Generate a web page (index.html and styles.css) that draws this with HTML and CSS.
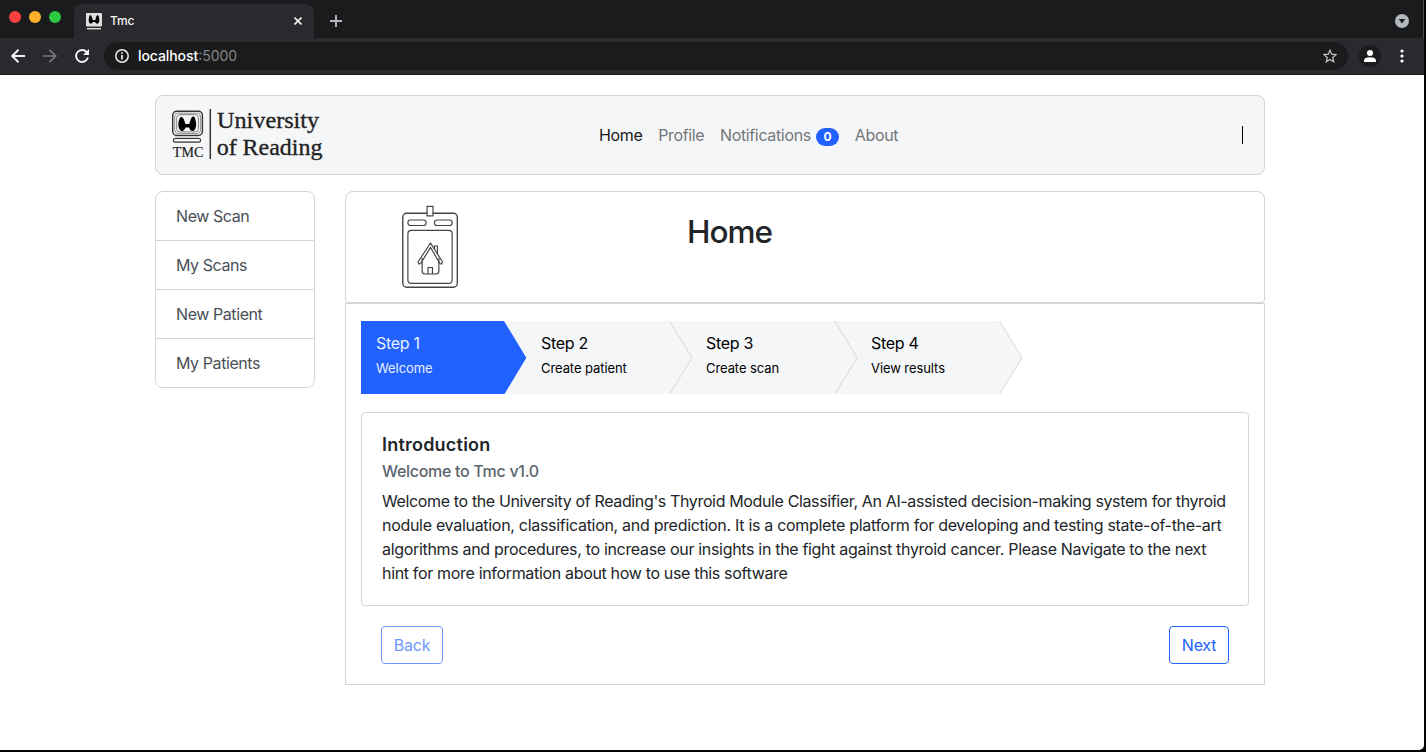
FILE: index.html
```html
<!DOCTYPE html>
<html lang="en">
<head>
<meta charset="utf-8">
<title>Tmc</title>
<link rel="stylesheet" href="styles.css">
</head>
<body>
<div class="window">
  <header class="tabbar">
    <div class="lights"><i class="red"></i><i class="amber"></i><i class="green"></i></div>
    <div class="tab">
      <svg class="favicon" width="16" height="17" viewBox="0 0 16 17"><rect width="16" height="13.500" rx="1" fill="#dedede"/><path d="M3 4.500Q3.200 2 4.500 2.200T6.500 6.500L7 7.300h2L9.500 6.500Q10 2.400 11.500 2.200T13 4.500Q14 9 12 10.500 10.500 11.200 9 9H7Q5.500 11.200 4 10.500 2 9 3 4.500Z" fill="#000"/><path d="M1 15.700h14" stroke="#ddd" stroke-width="1.400"/></svg>
      <span class="tab-title">Tmc</span>
      <svg class="tab-close" width="8" height="8" viewBox="0 0 8 8"><path d="M.5.5l7 7m0-7l-7 7" stroke="#f1f1f1" stroke-width="1.600"/></svg>
    </div>
    <svg class="plus" width="12" height="12" viewBox="0 0 12 12"><path d="M6 0v12M0 6h12" stroke="#b2b5ba" stroke-width="1.900"/></svg>
    <svg class="dropdown" width="14" height="14" viewBox="0 0 14 14"><circle cx="7" cy="7" r="7" fill="#b4b7bc"/><path d="M3.700 5h6.600L7 9.500z" fill="#191b1c"/></svg>
  </header>
  <div class="toolbar">
    <svg width="14" height="14" viewBox="0 0 14 14"><path d="M14 7H1.500M7.500.8L1.200 7l6.300 6.200" fill="none" stroke="#f4f4f5" stroke-width="1.900"/></svg>
    <svg width="14" height="14" viewBox="0 0 14 14"><path d="M0 7h12.500M6.500.8L12.800 7l-6.300 6.200" fill="none" stroke="#77797c" stroke-width="1.700"/></svg>
    <svg width="14" height="14" viewBox="0 0 14 14"><path d="M12.900 8.500A6 6 0 1 1 11.700 3.100" fill="none" stroke="#f4f4f5" stroke-width="1.900"/><path d="M14 0v6H8z" fill="#f4f4f5"/></svg>
    <div class="address">
      <svg width="14" height="14" viewBox="0 0 14 14"><circle cx="7" cy="7" r="6.200" fill="none" stroke="#eee" stroke-width="1.500"/><path d="M7 6v4.500M7 3.300v1.500" stroke="#eee" stroke-width="1.700"/></svg>
      <span class="url">localhost<span class="port">:5000</span></span>
      <svg class="star" width="14" height="14" viewBox="0 0 14 14"><path d="M7 1.200l1.700 4 4.300.4-3.300 2.900 1 4.200L7 10.500l-3.700 2.200 1-4.200L1 5.600l4.300-.4z" fill="none" stroke="#c4c5c8" stroke-width="1.200"/></svg>
    </div>
    <svg class="avatar" width="22" height="22" viewBox="0 0 22 22"><circle cx="11" cy="11" r="11" fill="#191b1c"/><circle cx="11" cy="8" r="3" fill="#fff"/><path d="M5 17v-1.500Q5.500 12.200 11 12.200T17 15.500V17z" fill="#fff"/></svg>
    <svg class="kebab" width="4" height="14" viewBox="0 0 4 14"><g fill="#fff"><circle cx="2" cy="2" r="1.600"/><circle cx="2" cy="7" r="1.600"/><circle cx="2" cy="12" r="1.600"/></g></svg>
  </div>
  <main class="page">
    <nav class="navbar">
      <svg class="logo" width="152" height="60" viewBox="0 -4 152 60">
        <g fill="none" stroke="#333"><rect x=".7" y="2.200" width="29.700" height="24.200" rx="4" stroke-width="1.400"/><rect x="2.700" y="4.200" width="25.700" height="20.200" rx="3" stroke="#777" stroke-width=".8"/><rect x="4.700" y="5.700" width="21.700" height="17.200" rx="3" stroke="#777" stroke-width=".9"/><rect x="1.500" y="29.500" width="27" height="3.700" rx="1.500" stroke-width="1.200"/><path d="M3 28h24" stroke="#999" stroke-width=".8"/><path d="M38.300 0v50" stroke-width="1.500"/></g>
        <path d="M7 11Q8.500 7 10 8T12.500 12L13.300 15h4L18.200 12Q19.500 7 21.500 7.500T23.500 11Q25.500 18 22 21.500 19 23.500 17 18.500H13.500Q11.500 23.500 8.500 21.500 5 18 7 11Z" fill="#000"/>
        <text class="logo-small" x=".8" y="48" textLength="30.500" lengthAdjust="spacingAndGlyphs">TMC</text>
        <text class="logo-text" x="45.100" y="19" textLength="102" lengthAdjust="spacingAndGlyphs">University</text>
        <text class="logo-text" x="44.700" y="46" textLength="105.700" lengthAdjust="spacingAndGlyphs">of Reading</text>
      </svg>
      <div class="links"><a class="current">Home</a><a class="profile">Profile</a><a class="notifications">Notifications</a><span class="badge">0</span><a>About</a></div>
      <div class="divider"></div>
    </nav>
    <div class="columns">
      <aside class="menu"><a>New Scan</a><a>My Scans</a><a>New Patient</a><a>My Patients</a></aside>
      <section class="content">
        <div class="heading">
          <svg class="home-icon" width="57" height="84" viewBox="0 0 58 84" preserveAspectRatio="none"><g fill="none" stroke="#444" stroke-width="1.200"><rect x=".8" y="8.200" width="55.500" height="74" rx="4" stroke-width="1.400"/><rect x="25.500" y="1.400" width="6" height="9.500" fill="#fff"/><rect x="6" y="15" width="18.500" height="5.500" rx="2.500"/><rect x="33" y="15" width="18" height="5.500" rx="2.500"/><rect x="6" y="25.400" width="45" height="53" rx="3.500"/><path d="M20.500 53v13q0 3 3 3h11q3 0 3-3V53"/><path d="M26.500 69v-6.500h4.500V69"/><path d="M29 38l12.300 19-1 2-1.700-.5L29 42.500 19 58.500l-1.700.5-1-2z"/><path d="M33 44v-3h3v8"/></g></svg>
          <h1>Home</h1>
        </div>
        <div class="body">
          <div class="steps">
            <svg class="chevrons" width="662" height="73" viewBox="0 0 662 73"><path d="M0 0h638.500L661 36.800 638.500 73H0z" fill="#f5f6f8"/><g fill="none" stroke="#d5d6d7"><path d="M308.500 0L331 36.800 308.500 73M473.700 0l22.500 36.800L473.700 73M638.500 0L661 36.800 638.500 73"/></g><path d="M0 0h143l22.300 36.800L143.500 73H0z" fill="#2161ff"/></svg>
            <div class="step active"><b>Step 1</b><small>Welcome</small></div>
            <div class="step"><b>Step 2</b><small>Create patient</small></div>
            <div class="step"><b>Step 3</b><small>Create scan</small></div>
            <div class="step"><b>Step 4</b><small>View results</small></div>
          </div>
          <article class="card">
            <h2>Introduction</h2>
            <h3>Welcome to Tmc v1.0</h3>
            <p><span class="line-tight">Welcome to the University of Reading's Thyroid Module Classifier, An AI-assisted decision-making system for thyroid</span><br><span class="line-wide">nodule evaluation, classification, and prediction. It is a complete platform for developing and testing state-of-the-art</span><br><span class="line-medium">algorithms and procedures, to increase our insights in the fight against thyroid cancer. Please Navigate to the next</span><br><span class="line-last">hint for more information about how to use this software</span></p>
          </article>
          <div class="actions"><button class="back" disabled>Back</button><button>Next</button></div>
        </div>
      </section>
    </div>
  </main>
</div>
</body>
</html>
```
FILE: styles.css
```css
* { box-sizing: border-box; }
body { margin: 0; height: 752px; overflow: hidden; background: #050506; font-family: Inter, "Liberation Sans", sans-serif; font-size: 16px; line-height: 24px; letter-spacing: -0.35px; color: #212529; }
svg { display: block; flex-shrink: 0; }
.window { width: 1424px; height: 750px; overflow: hidden; background: #fff; border-radius: 0 0 5px 0; }
.tabbar { display: flex; height: 38px; background: #191b1c; border-right: 1px solid #4a4b4d; }
.lights { display: flex; gap: 8px; width: 74px; padding: 11px 0 0 9px; }
.lights i { width: 12px; height: 12px; border-radius: 50%; }
.red { background: #fa4040; }
.amber { background: #fdb12b; }
.green { background: #2bc840; }
.tab { display: flex; align-items: center; width: 240px; height: 34px; margin-top: 4px; padding: 0 12px; border-radius: 8px 8px 0 0; background: #29292e; }
.tab-title { margin-left: 8px; font-size: 12px; font-weight: 500; letter-spacing: -0.2px; color: #f4f4f5; }
.tab-close { margin-left: auto; }
.plus { margin: 15px 0 0 16px; }
.dropdown { margin: 14px 14px 0 auto; }
.toolbar { display: flex; align-items: center; height: 37px; padding: 0 20px 1px 11px; gap: 18px; background: #29292e; border-bottom: 1px solid #17181a; }
.address { display: flex; align-items: center; flex: 1; height: 28px; margin-left: -3px; padding: 0 11px; border-radius: 14px; background: #191b1c; }
.url { margin-left: 9px; font-size: 14px; font-weight: 500; letter-spacing: -0.08px; color: #fff; }
.port { font-weight: 400; letter-spacing: 0; color: #85878a; }
.star { margin-left: auto; }
.avatar { margin-left: -7px; }
.kebab { margin-left: 1px; }
.page { width: 1110px; margin: 20px 0 0 155px; }
.navbar { display: flex; align-items: center; height: 80px; padding: 0 21px 0 16px; border: 1px solid #d3d4d6; border-radius: 8px; background: #f5f6f8; }
.logo { overflow: visible; }
.logo-text { font: 23.5px "Liberation Serif", serif; letter-spacing: 0; fill: #222; stroke: #222; stroke-width: 0.35px; }
.logo-small { font: 15px "Liberation Serif", serif; letter-spacing: 0; fill: #222; stroke: #222; stroke-width: 0.2px; }
.links { display: flex; align-items: center; margin-left: 275px; color: #747678; }
.links a { margin-right: 15.7px; }
.links .current { color: #16181a; }
.links .notifications { margin-right: 5px; }
.badge { width: 23px; height: 18px; margin: 3px 16px 0 0; border-radius: 9px; background: #2161ff; color: #fff; font-size: 12px; font-weight: 700; line-height: 18px; text-align: center; }
.divider { width: 1px; height: 18px; margin-left: auto; background: #000; }
.columns { display: flex; align-items: flex-start; gap: 30px; margin-top: 16px; }
.menu { display: flex; flex-direction: column; width: 160px; border: 1px solid #d3d4d5; border-radius: 8px; letter-spacing: -0.42px; color: #495057; }
.menu a { height: 49px; padding: 12px 20px; border-bottom: 1px solid #d3d4d5; }
.menu a:last-child { border: 0; height: 48px; }
.content { width: 920px; }
.heading { display: flex; height: 112px; padding: 13px 0 0 56px; border: 1px solid #d3d4d5; border-radius: 8px 8px 4px 4px; }
h1 { margin: 8px 0 0 228px; font-size: 31.5px; line-height: 38px; font-weight: 500; letter-spacing: -1px; }
.body { height: 382px; padding: 17px 15px 0; border: 1px solid #d3d4d5; }
.steps { position: relative; display: flex; width: 662px; height: 73px; }
.chevrons { position: absolute; inset: 0; }
.step { position: relative; display: flex; flex-direction: column; width: 165px; padding: 10px 0 0 15px; color: #000; }
.step b { font-weight: 400; letter-spacing: -0.3px; }
.step small { margin-top: 3px; font-size: 13px; line-height: 20px; letter-spacing: -0.08px; }
.active { color: #e8efff; }
.card { height: 194px; margin-top: 18px; padding: 20px; border: 1px solid #d3d4d5; border-radius: 4px; white-space: nowrap; }
h2 { margin: 0; font-size: 18px; line-height: 24px; font-weight: 600; letter-spacing: 0.22px; }
h3 { margin: 3px 0 7px; font-size: 16px; line-height: 22px; font-weight: 500; letter-spacing: -0.3px; color: #5c656d; }
p { margin: 0; }
.line-tight { letter-spacing: -0.365px; }
.line-wide { letter-spacing: -0.3px; }
.line-medium { letter-spacing: -0.32px; }
.line-last { letter-spacing: -0.33px; }
.actions { display: flex; justify-content: space-between; padding: 20px 20px 0; }
button { width: 60px; height: 38px; padding: 0; border: 1px solid #2161ff; border-radius: 4px; background: #fff; color: #2161ff; font: 16px Inter, sans-serif; letter-spacing: -0.25px; }
.back { width: 62px; opacity: 0.65; }
```
